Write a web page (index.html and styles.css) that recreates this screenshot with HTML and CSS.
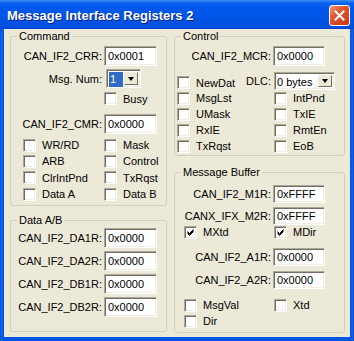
FILE: index.html
```html
<!DOCTYPE html>
<html lang="en">
<head>
    <meta charset="UTF-8">
    <title>Message Interface Registers 2</title>
    <link rel="stylesheet" href="styles.css">
</head>
<body>
<div class="window">
    <div class="titlebar">
        <span class="title">Message Interface Registers 2</span>
        <div class="close">
            <svg width="11" height="11" viewBox="0 0 11 11"><path d="M1.5 1.5 L9.5 9.5 M9.5 1.5 L1.5 9.5" stroke="#fff" stroke-width="2" stroke-linecap="square"/></svg>
        </div>
    </div>

    <div class="client">
        <!-- columna izquierda -->
        <div class="col col-left">
            <fieldset class="group group-command">
                <legend>Command</legend>
                <div class="field"><label>CAN_IF2_CRR:</label><input class="edit" value="0x0001"></div>
                <div class="field"><label>Msg. Num:</label>
                    <div class="combo combo-num"><span class="combo-text"><span class="sel">1</span></span><span class="combo-btn"><i class="arrow"></i></span></div>
                </div>
                <div class="field field-busy"><span></span><div class="check"><span class="box"></span>Busy</div></div>
                <div class="field"><label>CAN_IF2_CMR:</label><input class="edit" value="0x0000"></div>
                <div class="checks checks-cmd">
                    <div class="check"><span class="box"></span>WR/RD</div>
                    <div class="check"><span class="box"></span>Mask</div>
                    <div class="check"><span class="box"></span>ARB</div>
                    <div class="check"><span class="box"></span>Control</div>
                    <div class="check"><span class="box"></span>ClrIntPnd</div>
                    <div class="check"><span class="box"></span>TxRqst</div>
                    <div class="check"><span class="box"></span>Data A</div>
                    <div class="check"><span class="box"></span>Data B</div>
                </div>
            </fieldset>

            <fieldset class="group group-data">
                <legend>Data A/B</legend>
                <div class="field"><label>CAN_IF2_DA1R:</label><input class="edit" value="0x0000"></div>
                <div class="field"><label>CAN_IF2_DA2R:</label><input class="edit" value="0x0000"></div>
                <div class="field"><label>CAN_IF2_DB1R:</label><input class="edit" value="0x0000"></div>
                <div class="field"><label>CAN_IF2_DB2R:</label><input class="edit" value="0x0000"></div>
            </fieldset>
        </div>

        <!-- columna derecha -->
        <div class="col col-right">
            <fieldset class="group group-control">
                <legend>Control</legend>
                <div class="field"><label>CAN_IF2_MCR:</label><input class="edit" value="0x0000"></div>
                <div class="dlc-row">
                    <div class="check"><span class="box"></span>NewDat</div>
                    <label class="dlc-label">DLC:</label>
                    <div class="combo combo-dlc"><span class="combo-text">0 bytes</span><span class="combo-btn"><i class="arrow"></i></span></div>
                </div>
                <div class="checks checks-ctl">
                    <div class="check"><span class="box"></span>MsgLst</div>
                    <div class="check"><span class="box"></span>IntPnd</div>
                    <div class="check"><span class="box"></span>UMask</div>
                    <div class="check"><span class="box"></span>TxIE</div>
                    <div class="check"><span class="box"></span>RxIE</div>
                    <div class="check"><span class="box"></span>RmtEn</div>
                    <div class="check"><span class="box"></span>TxRqst</div>
                    <div class="check"><span class="box"></span>EoB</div>
                </div>
            </fieldset>

            <fieldset class="group group-buffer">
                <legend>Message Buffer</legend>
                <div class="field"><label>CAN_IF2_M1R:</label><input class="edit" value="0xFFFF"></div>
                <div class="field"><label>CANX_IFX_M2R:</label><input class="edit" value="0xFFFF"></div>
                <div class="checks checks-buf checks-mask">
                    <div class="check"><span class="box"><svg width="7" height="7" viewBox="0 0 7 7"><path d="M0.5 2.5 L2.5 4.5 L6.5 0.5 M0.5 3.5 L2.5 5.5 L6.5 1.5 M0.5 4.5 L2.5 6.5 L6.5 2.5" stroke="#000" stroke-width="1" fill="none"/></svg></span>MXtd</div>
                    <div class="check"><span class="box"><svg width="7" height="7" viewBox="0 0 7 7"><path d="M0.5 2.5 L2.5 4.5 L6.5 0.5 M0.5 3.5 L2.5 5.5 L6.5 1.5 M0.5 4.5 L2.5 6.5 L6.5 2.5" stroke="#000" stroke-width="1" fill="none"/></svg></span>MDir</div>
                </div>
                <div class="field field-gap"><label>CAN_IF2_A1R:</label><input class="edit" value="0x0000"></div>
                <div class="field"><label>CAN_IF2_A2R:</label><input class="edit" value="0x0000"></div>
                <div class="checks checks-buf checks-last">
                    <div class="check"><span class="box"></span>MsgVal</div>
                    <div class="check"><span class="box"></span>Xtd</div>
                    <div class="check"><span class="box"></span>Dir</div>
                </div>
            </fieldset>
        </div>
    </div>
</div>
</body>
</html>
```

FILE: styles.css
```css
* {
    box-sizing: border-box;
}
body {
    margin: 0;
    background-color: #fff;
    font-family: "Liberation Sans", Arial, sans-serif;
    font-size: 11px;
    color: #000;
}
.window {
    width: 354px;
    height: 341px;
    display: flex;
    flex-direction: column;
    background: linear-gradient(to right, #0831d9 0, #166aee 1px, #0055e5 3px, #0055e5 351px, #166aee 353px, #001ea0 354px);
}
.titlebar {
    height: 29px;
    display: flex;
    justify-content: space-between;
    padding: 0 4px 0 7px;
    background: linear-gradient(#3d8ff8 0, #0a60f0 3px, #0058ee 7px, #0055e5 18px, #0050e0 26px, #0046d4 29px);
}
.title {
    margin-top: 8px;
    font-size: 13px;
    font-weight: bold;
    color: #fff;
    text-shadow: 1px 1px #0a1c8c;
}
.close {
    width: 21px;
    height: 21px;
    margin-top: 5px;
    border: 1px solid #fff;
    border-radius: 3px;
    background: linear-gradient(135deg, #f09a7c 0, #e0532c 40%, #c63a14 100%);
    display: flex;
    align-items: center;
    justify-content: center;
}
.client {
    flex: 1;
    margin: 0 4px 4px;
    background-color: #ece9d8;
    display: flex;
    gap: 7px;
    padding: 1px 5px 0 6px;
}
.col {
    display: flex;
    flex-direction: column;
}
.col-left {
    width: 157px;
}
.col-right {
    width: 171px;
}
.group {
    margin: 0;
    padding: 0;
    min-width: 0;
    border: 1px solid #d0d0bf;
    border-radius: 3px;
}
.group legend {
    margin-left: 6px;
    padding: 0 2px;
    line-height: 13px;
}
.group-command {
    height: 176px;
    padding-top: 3px;
}
.group-data {
    height: 118px;
    margin-top: 8px;
    padding-top: 1px;
}
.group-control {
    height: 126px;
    padding-top: 3px;
}
.group-buffer {
    height: 167px;
    margin-top: 10px;
    padding-top: 6px;
}

/* filas con etiqueta y campo */
.field {
    height: 23px;
    display: grid;
    grid-template-columns: 91px auto;
    column-gap: 2px;
    align-items: start;
}
.field label {
    text-align: right;
    line-height: 20px;
    white-space: nowrap;
}
.group-control .field,
.group-buffer .field {
    grid-template-columns: 96px auto;
}
.group-buffer .field {
    height: 22px;
}
.group-buffer .field .edit {
    height: 18px;
}
.group-buffer .field label {
    line-height: 18px;
}
.field-busy {
    height: 22px;
}
.field-busy .check {
    height: 13px;
}
.group-buffer .field-gap {
    margin-top: 8px;
    height: 23px;
}
.edit {
    width: 53px;
    height: 20px;
    margin: 0;
    padding: 0 0 0 3px;
    font: inherit;
    color: #000;
    background: #fff;
    border: 1px solid;
    border-color: #aca899 #fff #fff #aca899;
    box-shadow: inset 1px 1px #716f64, inset -1px -1px #f1efe2;
    outline: none;
}
.group-control .edit,
.group-buffer .edit {
    width: 52px;
}

/* combos */
.combo {
    height: 19px;
    display: flex;
    padding: 2px;
    background: #fff;
    border: 1px solid;
    border-color: #aca899 #fff #fff #aca899;
    box-shadow: inset 1px 1px #716f64, inset -1px -1px #f1efe2;
}
.combo-num {
    width: 35px;
    margin-left: 2px;
}
.combo-text {
    flex: 1;
    line-height: 15px;
    white-space: nowrap;
}
.sel {
    display: block;
    height: 15px;
    padding-left: 1px;
    background: #316ac5;
    color: #fff;
}
.combo-btn {
    width: 14px;
    margin-left: 1px;
    background: #ece9d8;
    border: 1px solid;
    border-color: #f1efe2 #716f64 #716f64 #f1efe2;
    display: flex;
    align-items: center;
    justify-content: center;
}
.arrow {
    width: 0;
    height: 0;
    border-left: 3.5px solid transparent;
    border-right: 3.5px solid transparent;
    border-top: 4px solid #000;
}

/* casillas */
.checks {
    display: grid;
    grid-template-columns: 81px auto;
    grid-auto-rows: 16.3px;
    padding-left: 12px;
}
.check {
    display: flex;
    align-items: center;
    gap: 6px;
    white-space: nowrap;
}
.box {
    width: 13px;
    height: 13px;
    flex: none;
    background: #fff;
    border: 1px solid;
    border-color: #aca899 #fff #fff #aca899;
    box-shadow: inset 1px 1px #716f64, inset -1px -1px #f1efe2;
    display: flex;
    align-items: center;
    justify-content: center;
}
.dlc-row {
    height: 21px;
    display: flex;
    align-items: flex-end;
    padding-left: 2px;
}
.dlc-row .check {
    height: 13px;
    margin-bottom: 1px;
}
.dlc-label {
    margin-left: auto;
    margin-right: 3px;
    align-self: center;
    margin-top: 3px;
}
.combo-dlc {
    width: 61px;
    height: 18px;
    margin-right: 9px;
    margin-bottom: 0;
}
.checks-ctl {
    grid-template-columns: 97px auto;
    grid-auto-rows: 16px;
    padding-left: 2px;
}
.checks-buf {
    grid-template-columns: 90px auto;
    grid-auto-rows: 16px;
    padding-left: 9px;
}
.checks-mask {
    margin-top: -5px;
}
.checks-last {
    margin-top: 4px;
}
```
